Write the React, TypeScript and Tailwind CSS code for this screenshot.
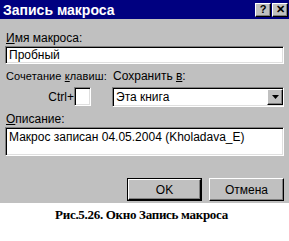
const sans = { fontFamily: '"Liberation Sans", Arial, sans-serif' };

function Sunken({ className, children }: { className?: string; children?: React.ReactNode }) {
  return (
    <div
      className={`border border-t-[#808080] border-l-[#808080] border-b-white border-r-white bg-white shadow-[inset_1px_1px_0_#000,inset_-1px_-1px_0_#dfdfdf] ${className ?? ''}`}
    >
      {children}
    </div>
  );
}

function Raised({ className, children }: { className?: string; children?: React.ReactNode }) {
  return (
    <div
      className={`flex items-center justify-center border border-t-white border-l-white border-b-black border-r-black bg-[#c0c0c0] shadow-[inset_-1px_-1px_0_#808080] ${className ?? ''}`}
    >
      {children}
    </div>
  );
}

export default function App() {
  return (
    <div className="w-[289px] h-[241px] bg-white overflow-hidden" style={sans}>
      <div className="h-[203px] bg-[#c0c0c0] flex flex-col text-[12px] text-black">
        {/* title bar */}
        <div className="h-[19px] bg-[#000080] flex items-center justify-between pl-[3px] pr-[1px]">
          <span className="text-white font-bold text-[14px] leading-none">Запись макроса</span>
          <div className="flex gap-[1px]">
            <Raised className="w-[16px] h-[14px] text-[11px] font-bold leading-none">?</Raised>
            <Raised className="w-[16px] h-[14px] text-[11px] font-bold leading-none">✕</Raised>
          </div>
        </div>

        <div className="px-[5px] flex flex-col">
          <div className="mt-[12px] h-[14px] leading-[14px] pl-[1px]">
            <u>И</u>мя макроса:
          </div>
          <Sunken className="mt-[1px] h-[18px] flex items-center pl-[3px] leading-none">Пробный</Sunken>

          <div className="flex mt-[5px]">
            <div className="w-[107px] flex flex-col">
              <div className="h-[14px] leading-[14px] pl-[1px] whitespace-nowrap text-[11px] tracking-[0.1px]">
                Сочетание <u>к</u>лавиш:
              </div>
              <div className="mt-[4px] flex items-center justify-end pr-[21px]">
                <span className="leading-none">Ctrl+</span>
                <Sunken className="w-[17px] h-[19px]" />
              </div>
            </div>
            <div className="flex-1 flex flex-col">
              <div className="h-[14px] leading-[14px] pl-[1px]">
                Сохранить <u>в</u>:
              </div>
              <Sunken className="mt-[4px] h-[20px] flex items-center justify-between pl-[3px] pr-0 leading-none">
                <span>Эта книга</span>
                <Raised className="w-[16px] h-[16px]">
                  <svg width="7" height="4" viewBox="0 0 7 4">
                    <path d="M0 0h7L3.5 4z" fill="#000" />
                  </svg>
                </Raised>
              </Sunken>
            </div>
          </div>

          <div className="mt-[5px] h-[14px] leading-[14px] pl-[1px]">
            <u>О</u>писание:
          </div>
          <Sunken className="mt-[1px] h-[29px] pl-[3px] pt-[2px] leading-[14px]">
            Макрос записан 04.05.2004 (Kholadava_E)
          </Sunken>

          <div className="mt-[22px] flex justify-end gap-[7px]">
            <div className="border border-black">
              <Raised className="w-[73px] h-[21px]">OK</Raised>
            </div>
            <Raised className="w-[75px] h-[23px]">Отмена</Raised>
          </div>
        </div>
      </div>
      <div
        className="text-center font-bold text-[13px] leading-none mt-[5px] tracking-[-0.3px] pr-[6px]"
        style={{ fontFamily: '"Liberation Serif", "Times New Roman", serif' }}
      >
        Рис.5.26. Окно Запись макроса
      </div>
    </div>
  );
}
